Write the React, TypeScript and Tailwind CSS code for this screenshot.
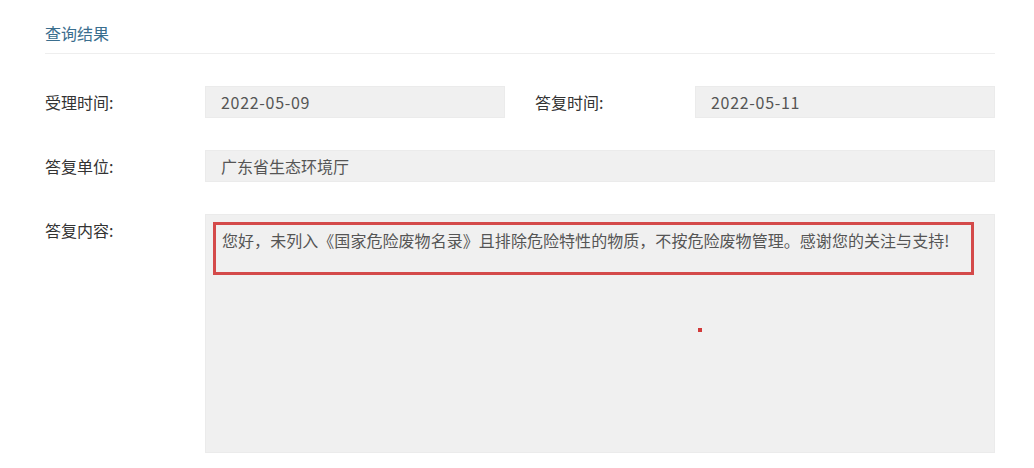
const font = { fontFamily: '"Microsoft YaHei", "Noto Sans CJK SC", "Noto Sans", sans-serif' };

function Field({ children, className = "" }: { children?: React.ReactNode; className?: string }) {
  return (
    <div className={`bg-[#f0f0f0] border border-[#ebebeb] text-[#555] px-[15px] ${className}`}>
      {children}
    </div>
  );
}

function Label({ text, className = "" }: { text: string; className?: string }) {
  return <div className={`w-[160px] shrink-0 text-[#333] ${className}`}>{text}</div>;
}

export default function App() {
  return (
    <div className="w-[1034px] h-[468px] bg-white overflow-hidden text-[16px]" style={font}>
      <div className="mx-[45px] w-[950px] pt-[21px]">
        <div className="text-[#3a6e8e] leading-[24px] pb-[8px] border-b border-[#eeeeee]">查询结果</div>

        <div className="mt-[32px] flex flex-col gap-[32px]">
          {/* row 1 */}
          <div className="flex gap-[30px]">
            <div className="flex items-center w-[460px]">
              <Label text="受理时间:" />
              <Field className="flex-1 h-[32px] leading-[30px] tracking-[0.7px]">2022-05-09</Field>
            </div>
            <div className="flex items-center w-[460px]">
              <Label text="答复时间:" />
              <Field className="flex-1 h-[32px] leading-[30px] tracking-[0.7px]">2022-05-11</Field>
            </div>
          </div>

          {/* row 2 */}
          <div className="flex items-center">
            <Label text="答复单位:" />
            <Field className="flex-1 h-[32px] leading-[30px]">广东省生态环境厅</Field>
          </div>

          {/* row 3 */}
          <div className="flex">
            <Label text="答复内容:" className="pt-[4px]" />
            <Field className="flex-1 h-[239px] !px-[7px] pt-[7px] relative">
              <div className="w-[761px] h-[53px] border-[3px] border-[#d44a4a] pl-[6px] pt-[2px] leading-[26px] tracking-[0.05px]">
                您好，未列入《国家危险废物名录》且排除危险特性的物质，不按危险废物管理。感谢您的关注与支持!
              </div>
              <div className="absolute left-[492px] top-[113px] w-[4px] h-[4px] bg-[#d23a3a]" />
            </Field>
          </div>
        </div>
      </div>
    </div>
  );
}
